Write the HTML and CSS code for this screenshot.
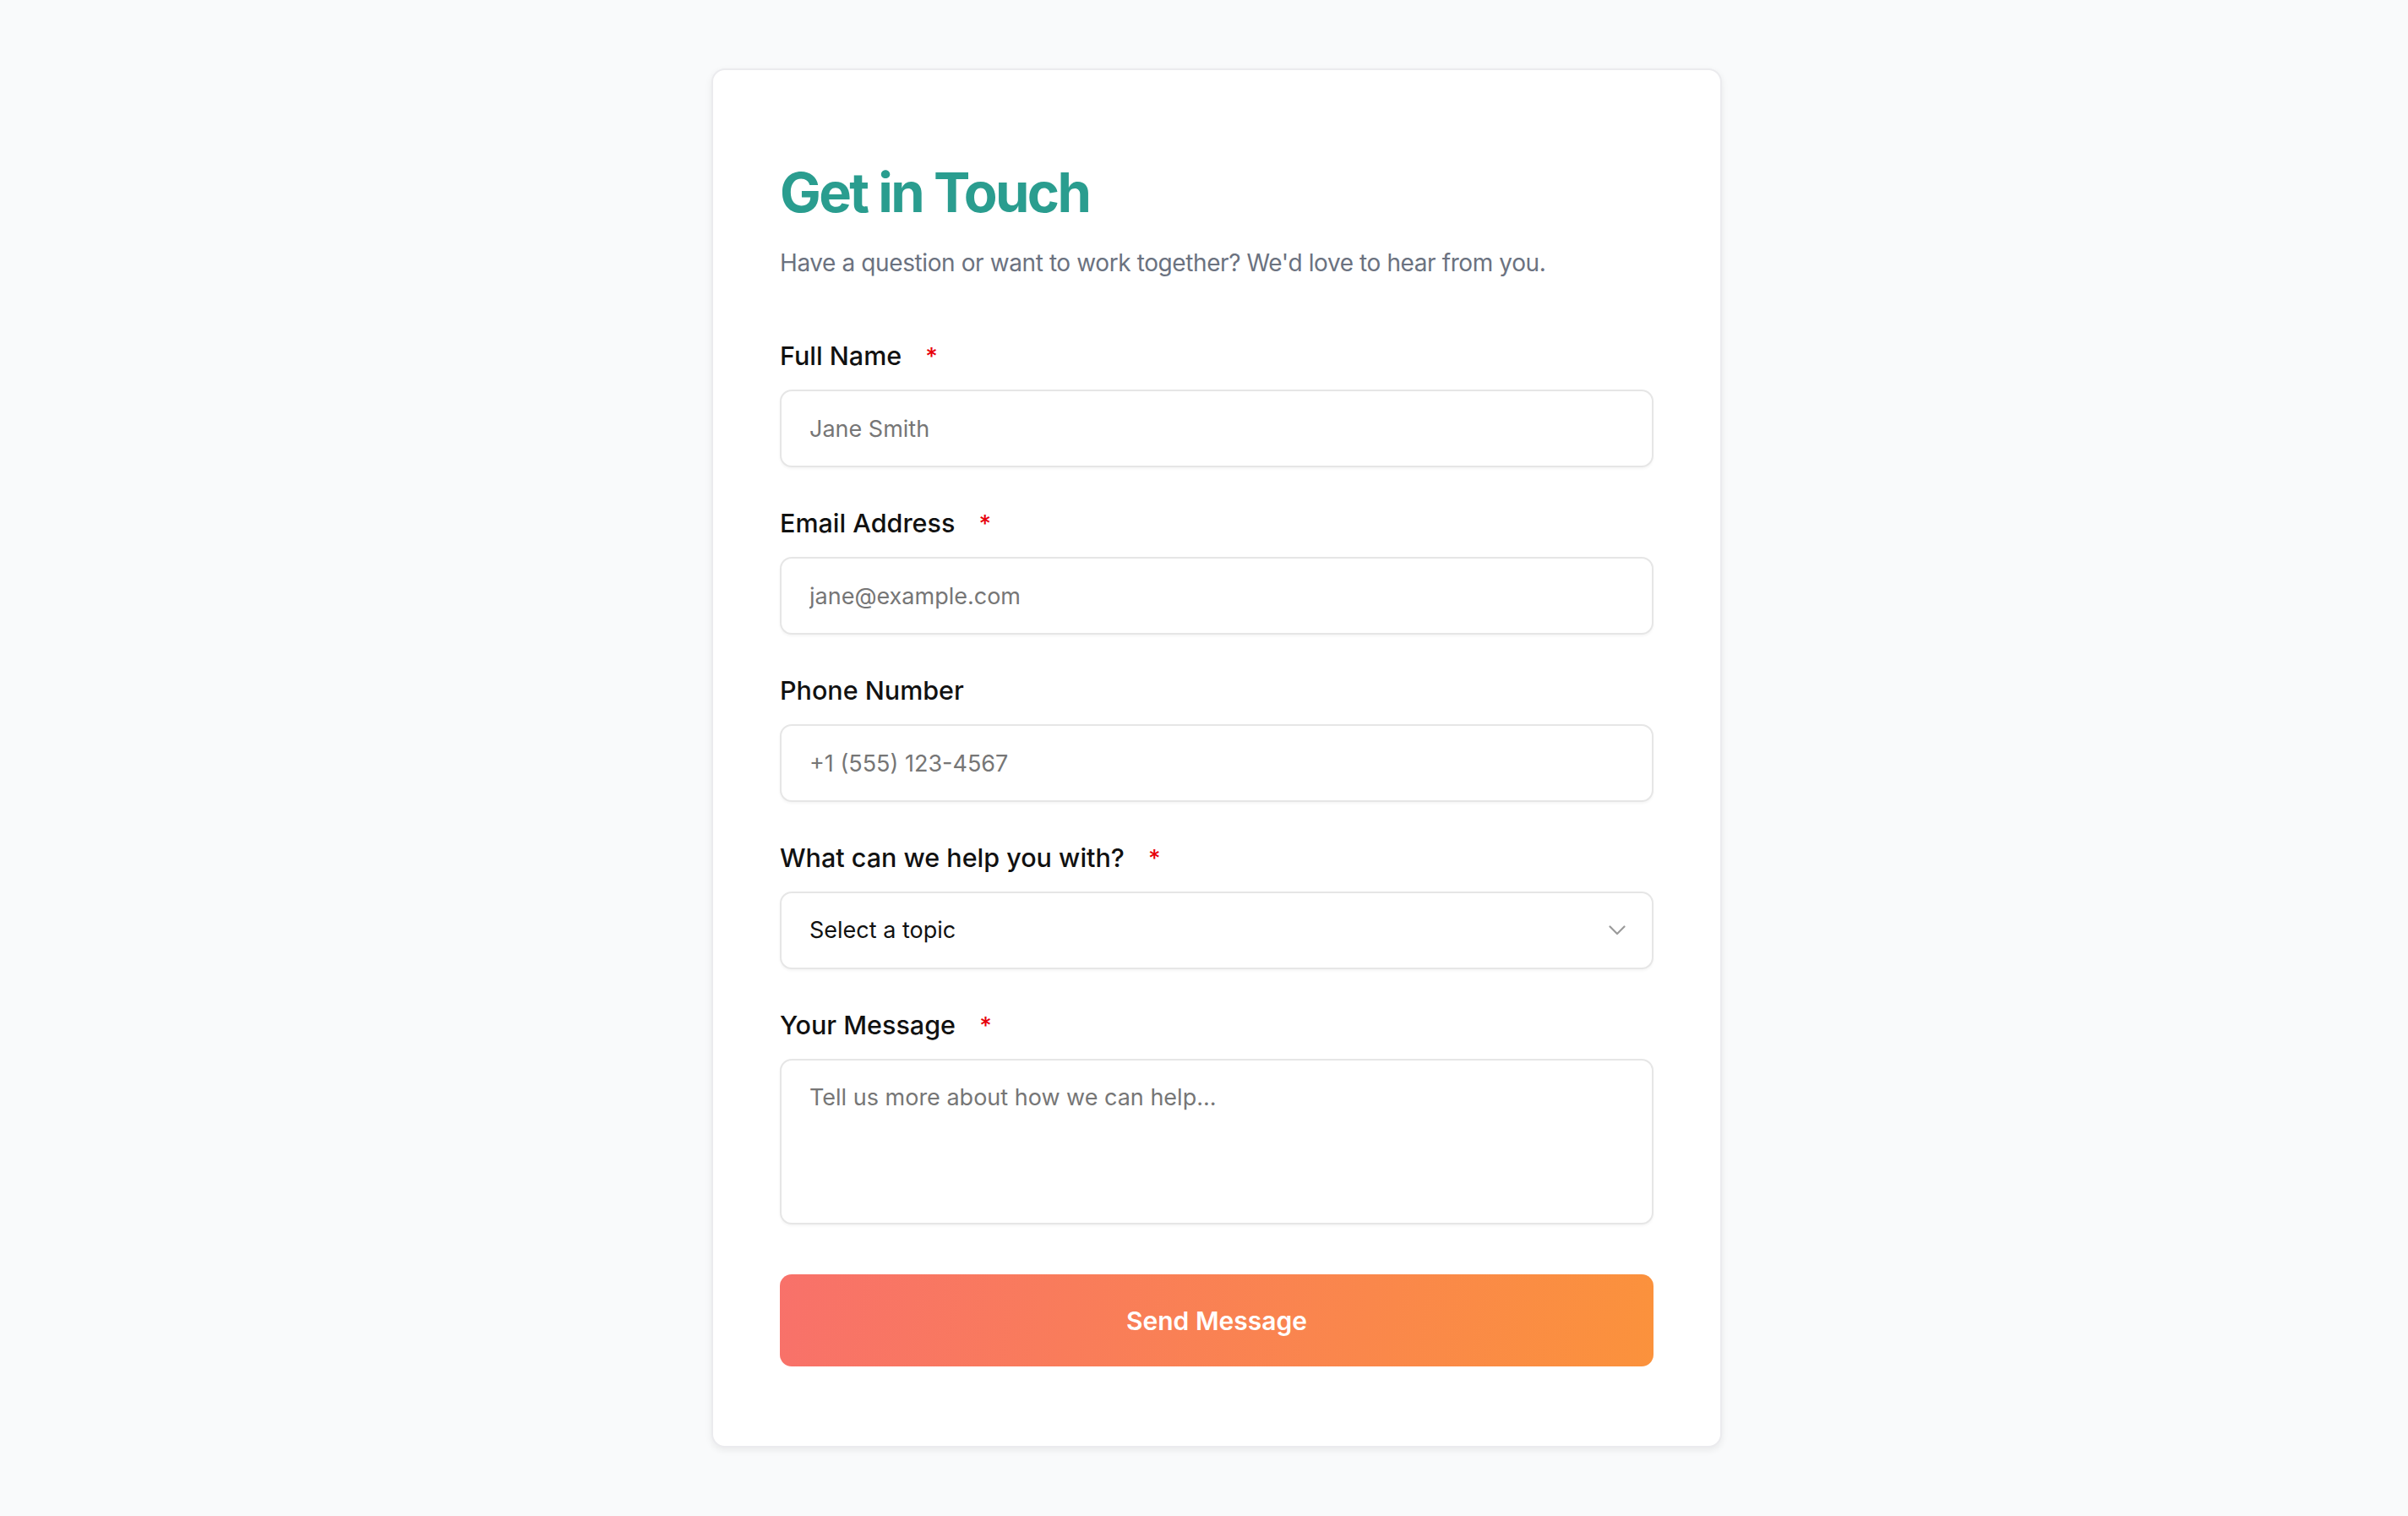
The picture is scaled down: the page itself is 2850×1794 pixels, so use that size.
FILE: index.html
```html
<!DOCTYPE html>
<html lang="en">
<head>
    <meta charset="UTF-8">
    <meta name="viewport" content="width=device-width, initial-scale=1.0">
    <title>Get in Touch</title>
    <link rel="stylesheet" href="styles.css">
</head>
<body>
    <div class="page">
        <div class="card">
            <h1>Get in Touch</h1>
            <p class="intro">Have a question or want to work together? We'd love to hear from you.</p>

            <form class="contact-form">
                <div class="form-group">
                    <label for="fullName">Full Name <span class="required">*</span></label>
                    <input type="text" id="fullName" placeholder="Jane Smith">
                </div>

                <div class="form-group">
                    <label for="email">Email Address <span class="required">*</span></label>
                    <input type="email" id="email" placeholder="jane@example.com">
                </div>

                <div class="form-group">
                    <label for="phone">Phone Number</label>
                    <input type="tel" id="phone" placeholder="+1 (555) 123-4567">
                </div>

                <div class="form-group">
                    <label for="topic">What can we help you with? <span class="required">*</span></label>
                    <div class="select-wrap">
                        <select id="topic">
                            <option value="">Select a topic</option>
                            <option value="general">General Inquiry</option>
                            <option value="project">New Project</option>
                            <option value="support">Support</option>
                        </select>
                        <svg class="chevron" width="20" height="12" viewBox="0 0 20 12" fill="none">
                            <path d="M1.5 1.5 L10 10 L18.5 1.5" stroke="#9b9b9b" stroke-width="2.2" stroke-linecap="round" stroke-linejoin="round"/>
                        </svg>
                    </div>
                </div>

                <div class="form-group">
                    <label for="message">Your Message <span class="required">*</span></label>
                    <textarea id="message" placeholder="Tell us more about how we can help..."></textarea>
                </div>

                <button type="submit" class="submit-btn">Send Message</button>
            </form>
        </div>
    </div>
</body>
</html>
```

FILE: styles.css
```css
* {
    box-sizing: border-box;
}

body {
    margin: 0;
    font-family: Inter, 'Noto Sans', sans-serif;
    background: #f9fafb;
    color: #111111;
}

.page {
    min-height: 100vh;
    display: flex;
    justify-content: center;
    align-items: flex-start;
    padding: 81px 0 81px 30px;
}

.card {
    width: 1196px;
    background: #ffffff;
    border: 2px solid #ebebee;
    border-radius: 16px;
    box-shadow: 0 3px 8px rgba(0, 0, 0, 0.07);
    padding: 106px 79px 94px;
}

h1 {
    margin: 0 0 23px 0;
    font-size: 65px;
    line-height: 1.2;
    font-weight: 700;
    letter-spacing: -2.6px;
    color: #2a9d8f;
}

.intro {
    margin: 0 0 67px 0;
    font-size: 28px;
    line-height: 43px;
    letter-spacing: -0.4px;
    color: #6b7280;
}

.form-group {
    margin-bottom: 45px;
}

label {
    display: block;
    margin-bottom: 19px;
    font-size: 30.5px;
    line-height: 42px;
    font-weight: 500;
    color: #111111;
}

.required {
    margin-left: 20px;
    color: #e7000b;
    font-size: 28px;
    line-height: 1;
}

input,
select,
textarea {
    display: block;
    width: 100%;
    padding: 24px 33px;
    border: 2px solid #e6e6e6;
    border-radius: 14px;
    background: #ffffff;
    font-family: inherit;
    font-size: 27px;
    line-height: 40px;
    color: #111111;
    box-shadow: 0 2px 3px rgba(0, 0, 0, 0.04);
    outline: none;
}

input::placeholder,
textarea::placeholder {
    color: #767676;
}

input {
    height: 92px;
}

.select-wrap {
    position: relative;
}

select {
    height: 92px;
    appearance: none;
    -webkit-appearance: none;
}

.chevron {
    position: absolute;
    right: 33px;
    top: 50%;
    transform: translateY(-50%);
    pointer-events: none;
}

textarea {
    height: 196px;
    resize: none;
}

.submit-btn {
    display: block;
    width: 100%;
    height: 109px;
    margin-top: 59px;
    border: none;
    border-radius: 14px;
    background: linear-gradient(100deg, #f8716a 0%, #fb923c 100%);
    color: #ffffff;
    font-family: inherit;
    font-size: 30px;
    font-weight: 600;
    cursor: pointer;
}
```
